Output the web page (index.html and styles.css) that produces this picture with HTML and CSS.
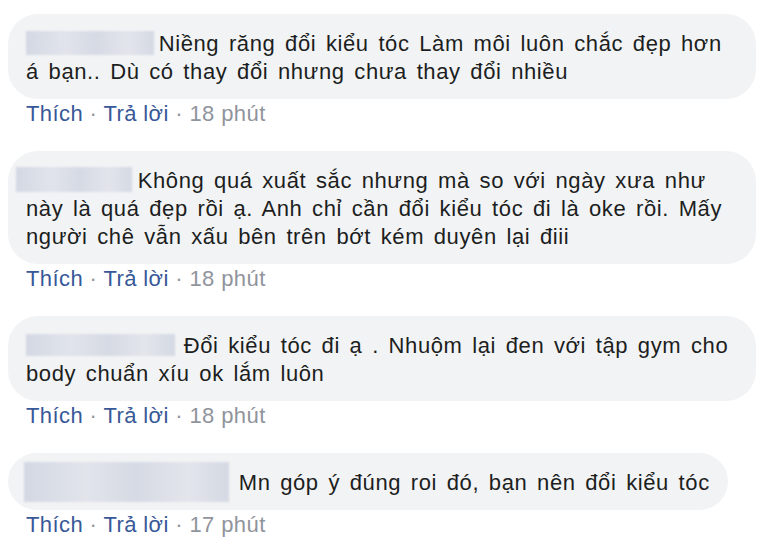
FILE: index.html
```html
<!DOCTYPE html>
<html lang="vi">
<head>
  <meta charset="UTF-8">
  <title>Bình luận</title>
  <link rel="stylesheet" href="styles.css">
</head>
<body>
  <div class="comments">
    <div class="comment">
      <div class="bubble full">
        <span class="name n1"></span> Niềng răng đổi kiểu tóc Làm môi luôn chắc đẹp hơn<br>á bạn.. Dù có thay đổi nhưng chưa thay đổi nhiều
      </div>
      <div class="meta"><a>Thích</a> · <a>Trả lời</a> · 18 phút</div>
    </div>

    <div class="comment">
      <div class="bubble full">
        <span class="name n2"></span> Không quá xuất sắc nhưng mà so với ngày xưa như<br>này là quá đẹp rồi ạ. Anh chỉ cần đổi kiểu tóc đi là oke rồi. Mấy<br>người chê vẫn xấu bên trên bớt kém duyên lại điii
      </div>
      <div class="meta"><a>Thích</a> · <a>Trả lời</a> · 18 phút</div>
    </div>

    <div class="comment">
      <div class="bubble full">
        <span class="name n3"></span> Đổi kiểu tóc đi ạ . Nhuộm lại đen với tập gym cho<br>body chuẩn xíu ok lắm luôn
      </div>
      <div class="meta"><a>Thích</a> · <a>Trả lời</a> · 18 phút</div>
    </div>

    <div class="comment">
      <div class="bubble">
        <span class="name n4"></span> Mn góp ý đúng roi đó, bạn nên đổi kiểu tóc
      </div>
      <div class="meta"><a>Thích</a> · <a>Trả lời</a> · 17 phút</div>
    </div>
  </div>
</body>
</html>
```

FILE: styles.css
```css
body { margin: 0; padding: 14px 8px; background: #fff; font-family: "Liberation Sans", Arial, sans-serif; color: #1c1e21; }
.comments { display: flex; flex-direction: column; align-items: flex-start; gap: 23px; }
.comment { display: flex; flex-direction: column; align-items: flex-start; }
.bubble { background: #f2f3f5; border-radius: 30px; padding: 16px 18px 13px; font-size: 22px; line-height: 28px; letter-spacing: 0.6px; word-spacing: 3px; max-width: 748px; box-sizing: border-box; white-space: nowrap; }
.bubble.full { width: 748px; }
.name { display: inline-block; height: 24px; vertical-align: -4px; background: linear-gradient(90deg, #d3d8e3, #e1e4eb 30%, #d6dae4 55%, #e3e5ec 80%, #d4d9e3); filter: blur(0.8px); }
.n1 { width: 128px; margin-right: -5px; }
.n2 { width: 116px; margin-left: -10px; margin-right: -4px; height: 25px; }
.n3 { width: 149px; height: 22px; vertical-align: -3px; margin-right: -1px; }
.n4 { width: 205px; height: 40px; margin: -8px 0 -8px -2px; }
.meta { padding: 1px 0 0 18px; font-size: 22px; line-height: 28px; letter-spacing: 0.4px; color: #90949c; }
.meta a { color: #385898; }
```
